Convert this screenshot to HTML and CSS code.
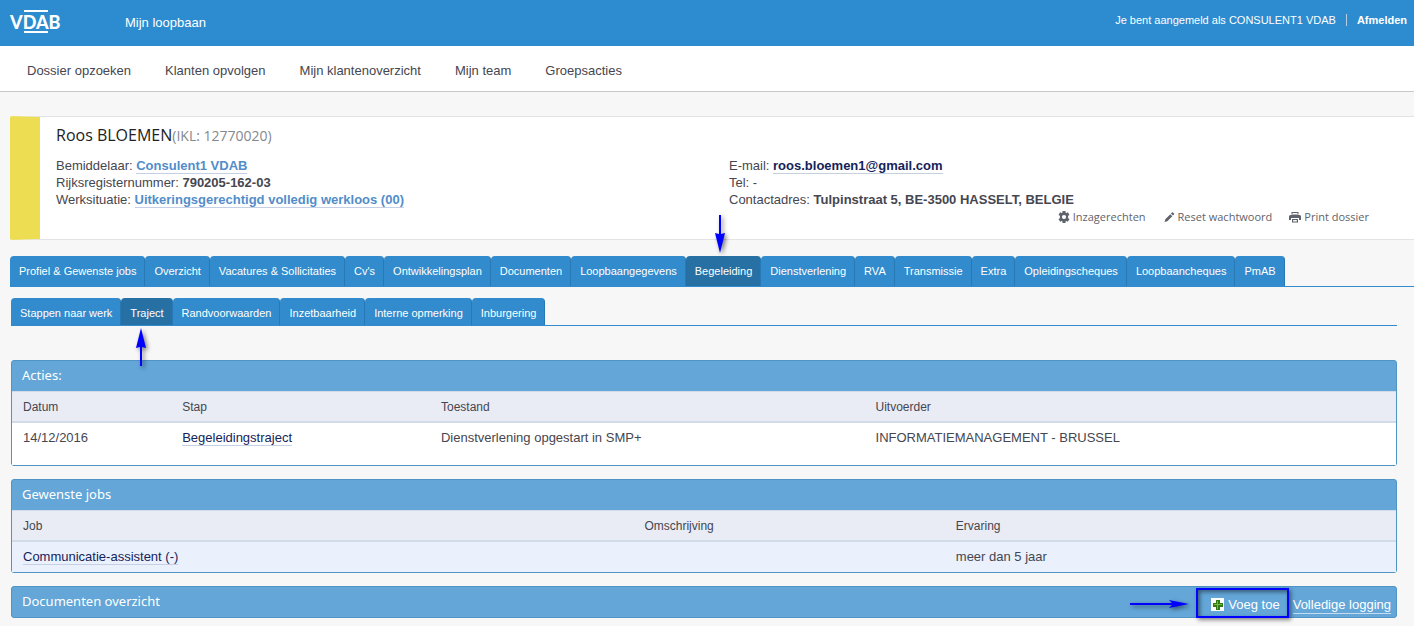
FILE: index.html
```html
<!DOCTYPE html>
<html lang="nl">
<head>
<meta charset="utf-8">
<meta name="viewport" content="width=device-width, initial-scale=1">
<title>Mijn loopbaan - VDAB</title>
<link rel="stylesheet" href="styles.css">
</head>
<body>
<header class="topbar">
  <a class="logo" href="#">VDAB</a>
  <a class="app-name" href="#">Mijn loopbaan</a>
  <div class="session">
    <span>Je bent aangemeld als CONSULENT1 VDAB</span>
    <a class="logout" href="#">Afmelden</a>
  </div>
</header>
<nav class="mainnav" aria-label="Hoofdmenu">
  <a href="#">Dossier opzoeken</a>
  <a href="#">Klanten opvolgen</a>
  <a href="#">Mijn klantenoverzicht</a>
  <a href="#">Mijn team</a>
  <a href="#">Groepsacties</a>
</nav>

<main>
  <section class="client">
    <h1 class="client-name">Roos BLOEMEN<span class="client-id">(IKL: 12770020)</span></h1>
    <div class="facts">
      <div>
        <p>Bemiddelaar: <a class="soft" href="#">Consulent1 VDAB</a></p>
        <p>Rijksregisternummer: <strong>790205-162-03</strong></p>
        <p>Werksituatie: <a class="soft" href="#">Uitkeringsgerechtigd volledig werkloos (00)</a></p>
      </div>
      <div>
        <p>E-mail: <a class="mail" href="#">roos.bloemen1@gmail.com</a></p>
        <p>Tel: -</p>
        <p>Contactadres: <strong>Tulpinstraat 5, BE-3500 HASSELT, BELGIE</strong></p>
      </div>
    </div>
    <div class="actions">
      <a href="#"><svg class="icon" viewBox="0 0 12 12"><path fill="currentColor" fill-rule="evenodd" d="M4.500 0h3v1.600l.9.500 1.500-.8L11.500 4l-1.400.8v2.400l1.400.8-1.600 2.700-1.500-.8-.9.500V12h-3v-1.600l-.9-.5-1.500.8L.5 8l1.400-.8V4.800L.5 4l1.600-2.700 1.500.8.9-.5zM6 3.900a2.100 2.100 0 1 0 0 4.200 2.100 2.100 0 0 0 0-4.200z"/></svg>Inzagerechten</a>
      <a href="#"><svg class="icon" viewBox="0 0 12 12"><path fill="currentColor" d="M1.500 11l.8-2.800 5-5 2 2-5 5zM7.900 2.600L9 1.500q.5-.4 1 0l1 1q.4.500 0 1L9.900 4.600z"/></svg>Reset wachtwoord</a>
      <a href="#"><svg class="icon" viewBox="0 0 12 12"><path fill="currentColor" fill-rule="evenodd" d="M2.500 1h7v2.500h-7zM3.500 2v1h5V2zM1.500 4h9Q12 4 12 5.500V9h-2V7H2v2H0V5.500Q0 4 1.500 4zM3 8h6v3.500H3zM4.200 9v1.400h3.600V9z"/></svg>Print dossier</a>
    </div>
  </section>

  <nav class="tabs" aria-label="Dossier">
    <a href="#">Profiel &amp; Gewenste jobs</a>
    <a href="#">Overzicht</a>
    <a href="#">Vacatures &amp; Sollicitaties</a>
    <a href="#">Cv's</a>
    <a href="#">Ontwikkelingsplan</a>
    <a href="#">Documenten</a>
    <a href="#">Loopbaangegevens</a>
    <a class="active" href="#" aria-current="page">Begeleiding<svg class="arrow arrow-down" viewBox="0 0 12 38"><path d="M5 0h2v19l4-1-5 20L1 18l4 1z"/></svg></a>
    <a href="#">Dienstverlening</a>
    <a href="#">RVA</a>
    <a href="#">Transmissie</a>
    <a href="#">Extra</a>
    <a href="#">Opleidingscheques</a>
    <a href="#">Loopbaancheques</a>
    <a href="#">PmAB</a>
  </nav>

  <div class="content">
    <nav class="tabs subtabs" aria-label="Begeleiding">
      <a href="#">Stappen naar werk</a>
      <a class="active" href="#" aria-current="page">Traject<svg class="arrow arrow-up" viewBox="0 0 12 38"><path d="M5 38h2V19l4 1L6 0 1 20l4-1z"/></svg></a>
      <a href="#">Randvoorwaarden</a>
      <a href="#">Inzetbaarheid</a>
      <a href="#">Interne opmerking</a>
      <a href="#">Inburgering</a>
    </nav>

    <section class="panel">
      <h2 class="panel-head">Acties:</h2>
      <table class="grid">
        <colgroup><col class="c-date"><col class="c-step"><col class="c-state"><col></colgroup>
        <thead><tr><th>Datum</th><th>Stap</th><th>Toestand</th><th>Uitvoerder</th></tr></thead>
        <tbody><tr class="tall"><td>14/12/2016</td><td><a href="#">Begeleidingstraject</a></td><td>Dienstverlening opgestart in SMP+</td><td>INFORMATIEMANAGEMENT - BRUSSEL</td></tr></tbody>
      </table>
    </section>

    <section class="panel">
      <h2 class="panel-head">Gewenste jobs</h2>
      <table class="grid">
        <colgroup><col class="c-job"><col class="c-desc"><col></colgroup>
        <thead><tr><th>Job</th><th>Omschrijving</th><th>Ervaring</th></tr></thead>
        <tbody><tr class="tinted"><td><a href="#">Communicatie-assistent (-)</a></td><td></td><td>meer dan 5 jaar</td></tr></tbody>
      </table>
    </section>

    <section class="panel">
      <div class="panel-head">
        <h2 class="panel-title">Documenten overzicht</h2>
        <div class="add-wrap">
          <button class="add" type="button"><svg class="plus" viewBox="0 0 13 13"><path fill="#fff" d="M0 0h13v13H0z"/><path fill="#2f7d12" d="M5 2h4v3h3v4H9v3H5V9H2V5h3z"/><path fill="#78bd3c" d="M6 3h1v3h4v1H7v4H6V7H3V6h3z"/></svg>Voeg toe</button>
          <svg class="arrow arrow-right" viewBox="0 0 59 10"><path d="M0 4h42l-3-3 20 4-20 4 3-3H0z"/></svg>
        </div>
        <a class="log" href="#">Volledige logging</a>
      </div>
    </section>
  </div>
</main>
</body>
</html>
```
FILE: styles.css
```css
* { box-sizing: border-box; }
body {
  margin: 0;
  background: #f7f7f7;
  color: #454650;
  font: 13px/17px "Liberation Sans", Arial, sans-serif;
}
a { color: inherit; text-decoration: none; }
h1, h2, p { margin: 0; font-weight: normal; }

.topbar {
  display: flex;
  align-items: flex-start;
  height: 46px;
  padding: 10px 7px 0 10px;
  background: #2d8bcf;
  color: #fff;
}
.logo {
  position: relative;
  width: 50px;
  padding-top: 2px;
  font: 900 18px/20px Lato, sans-serif;
}
.logo::before, .logo::after {
  content: "";
  position: absolute;
  left: 14px;
  width: 24px;
  height: 2px;
  background: #fff;
}
.logo::before { top: 0; }
.logo::after { top: 21px; }
.app-name { margin: 4px 0 0 65px; }
.session {
  display: flex;
  margin-left: auto;
  padding-top: 4px;
  font-size: 11px;
  line-height: 12px;
}
.logout {
  margin-left: 10px;
  padding-left: 10px;
  border-left: 1px solid #b9cfe0;
  font-weight: bold;
}

.mainnav {
  display: flex;
  gap: 34px;
  padding: 16px 27px 12px;
  background: #fff;
  border-bottom: 1px solid #c8c8c8;
}

.client {
  margin: 24px 0 16px 10px;
  padding: 8px 12px 14px 16px;
  background: #fff;
  border: solid #e3e3e3;
  border-width: 1px 0;
  border-left: 30px solid #eddd53;
  border-radius: 2px 0 0 2px;
}
.client-name {
  color: #222;
  font: 16px/20px "Open Sans", sans-serif;
}
.client-id { color: #85898e; font-size: 14px; }
.facts {
  display: grid;
  grid-template-columns: 1fr 1fr;
  padding: 11px 0 1px;
}
.soft {
  color: #528dc9;
  font-weight: bold;
  border-bottom: 1px solid #c5cfe6;
}
.mail {
  color: #14235a;
  font-weight: bold;
  border-bottom: 1px solid #c5d0df;
}
.actions {
  display: flex;
  justify-content: flex-end;
  gap: 17px;
  margin-right: 33px;
  color: #5f636b;
  font: 11px/16px "Open Sans", sans-serif;
}
.actions a { display: flex; align-items: center; gap: 3px; }
.icon { width: 12px; height: 12px; }

.tabs {
  display: flex;
  margin-left: 10px;
  border-bottom: 1px solid #318bcc;
  color: #fff;
  font-size: 11px;
  line-height: 14px;
}
.tabs a {
  position: relative;
  padding: 8px 8px 8px 9px;
  background: #318bcc;
  border-right: 1px solid #2779b5;
  border-radius: 4px 4px 0 0;
  white-space: nowrap;
}
.tabs .active { background: #2770a3; }
.content { margin: 11px 17px 0 11px; }
.subtabs { margin: 0 0 34px; }
.subtabs a { padding-bottom: 5px; }

.arrow {
  position: absolute;
  fill: #00f;
  filter: drop-shadow(2px 2px 2px rgba(0, 0, 0, .5));
  overflow: visible;
}
.arrow-down { width: 12px; height: 38px; left: 28px; bottom: 33px; }
.arrow-up { width: 12px; height: 38px; left: 14px; top: 30px; z-index: 1; }
.arrow-right { width: 59px; height: 10px; right: 100%; top: 11px; margin-right: 7px; }

.panel {
  margin-bottom: 13px;
  border: 1px solid #4e94c4;
  border-radius: 3px;
  background: #63a6d7;
}
.panel-head {
  display: flex;
  align-items: center;
  height: 30px;
  padding: 0 5px 2px 10px;
  color: #fff;
  font: 13px/18px "Noto Sans", sans-serif;
}
.panel-title { flex: 1; font: inherit; }
.grid {
  width: 100%;
  table-layout: fixed;
  border-collapse: collapse;
  background: #fff;
}
.grid th, .grid td { padding: 6px 11px 7px; text-align: left; vertical-align: top; }
.grid th {
  padding: 7px 11px 5px;
  background: #e9ecf5;
  border-top: 1px solid #d2dce8;
  border-bottom: 2px solid #d2dce8;
  font-size: 12px;
  font-weight: normal;
}
.grid a { color: #14235a; border-bottom: 1px solid #c5cfe6; }
.tall { height: 43px; }
.tinted { background: #eaf1fd; }
.c-date { width: 11.5%; }
.c-step { width: 18.7%; }
.c-state { width: 31.4%; }
.c-job { width: 44.9%; }
.c-desc { width: 22.5%; }

.add-wrap { position: relative; margin-top: 4px; }
.add {
  display: flex;
  align-items: center;
  gap: 4px;
  height: 30px;
  padding: 3px 7px 0 13px;
  border: 2px solid #00f;
  background: none;
  color: #fff;
  font: 13px/17px "Liberation Sans", Arial, sans-serif;
  box-shadow: 2px 2px 4px rgba(0, 0, 0, .45), inset 2px 2px 4px rgba(0, 0, 0, .45);
}
.plus { width: 13px; height: 13px; }
.log {
  margin: 8px 0 0 4px;
  border-bottom: 1px solid #c5dcef;
  font: 13px/16px "Liberation Sans", Arial, sans-serif;
}
```
